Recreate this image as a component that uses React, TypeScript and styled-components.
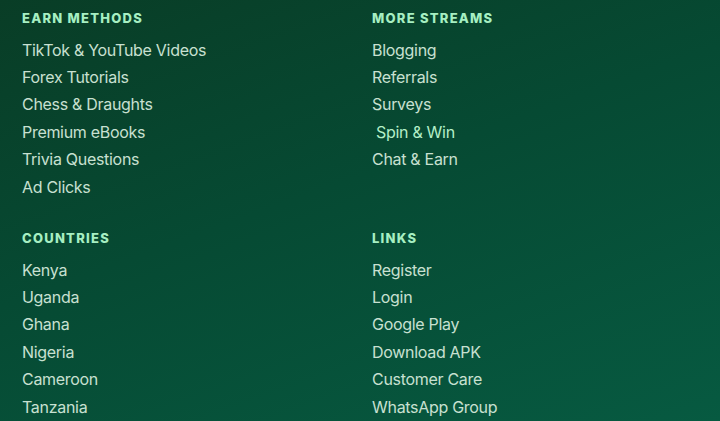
import React from 'react';
import styled, { createGlobalStyle } from 'styled-components';

const GlobalStyle = createGlobalStyle`
  html, body {
    margin: 0;
    padding: 0;
    height: 100%;
  }
  body {
    background: #08442b;
    font-family: Inter, "Noto Sans", "Liberation Sans", sans-serif;
    -webkit-font-smoothing: antialiased;
  }
`;

interface ILink {
  label: string;
  highlight?: boolean;
}

interface ISection {
  title: string;
  links: ILink[];
}

const sections: ISection[] = [
  {
    title: 'Earn Methods',
    links: [
      { label: 'TikTok & YouTube Videos' },
      { label: 'Forex Tutorials' },
      { label: 'Chess & Draughts' },
      { label: 'Premium eBooks' },
      { label: 'Trivia Questions' },
      { label: 'Ad Clicks' },
    ],
  },
  {
    title: 'More Streams',
    links: [
      { label: 'Blogging' },
      { label: 'Referrals' },
      { label: 'Surveys' },
      { label: 'Spin & Win', highlight: true },
      { label: 'Chat & Earn' },
    ],
  },
  {
    title: 'Countries',
    links: [
      { label: 'Kenya' },
      { label: 'Uganda' },
      { label: 'Ghana' },
      { label: 'Nigeria' },
      { label: 'Cameroon' },
      { label: 'Tanzania' },
    ],
  },
  {
    title: 'Links',
    links: [
      { label: 'Register' },
      { label: 'Login' },
      { label: 'Google Play' },
      { label: 'Download APK' },
      { label: 'Customer Care' },
      { label: 'WhatsApp Group' },
    ],
  },
];

export default function App() {
  return (
    <>
      <GlobalStyle />
      <Footer>
        {sections.map((section) => (
          <Section key={section.title}>
            <Heading>{section.title}</Heading>
            <LinkList>
              {section.links.map((link) => (
                <LinkItem key={link.label}>
                  <FooterLink href="#" $highlight={link.highlight}>
                    {link.label}
                  </FooterLink>
                </LinkItem>
              ))}
            </LinkList>
          </Section>
        ))}
      </Footer>
    </>
  );
}

const Footer = styled.footer`
  display: grid;
  grid-template-columns: 350px 1fr;
  row-gap: 29px;
  box-sizing: border-box;
  width: 720px;
  height: 421px;
  padding: 10px 0 0 22px;
  overflow: hidden;
  background: linear-gradient(160deg, #093d26 0%, #064a33 45%, #075a41 100%);
`;

const Section = styled.section`
  display: flex;
  flex-direction: column;
`;

const Heading = styled.h3`
  margin: 0 0 10px;
  font-size: 13px;
  line-height: 16px;
  font-weight: 800;
  letter-spacing: 1.25px;
  text-transform: uppercase;
  color: #a6efc2;
`;

const LinkList = styled.ul`
  list-style: none;
  margin: 0;
  padding: 0;
`;

const LinkItem = styled.li`
  height: 27.4px;
  display: flex;
  align-items: center;
`;

const FooterLink = styled.a<{ $highlight?: boolean }>`
  font-size: 16px;
  font-weight: 400;
  letter-spacing: -0.3px;
  text-decoration: none;
  color: ${(p) => (p.$highlight ? '#b4efc8' : '#c8e0d1')};
  padding-left: ${(p) => (p.$highlight ? '4px' : '0')};
`;
